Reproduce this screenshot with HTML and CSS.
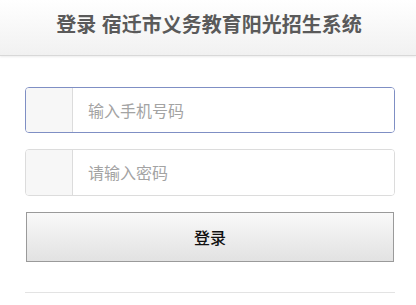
FILE: index.html
```html
<!DOCTYPE html>
<html lang="zh">
<head>
<meta charset="utf-8">
<title>登录 宿迁市义务教育阳光招生系统</title>
<link rel="stylesheet" href="styles.css">
</head>
<body>
<header class="bar">
  <h1 class="title">登录 宿迁市义务教育阳光招生系统</h1>
</header>
<main class="content">
  <form class="login">
    <div class="group focused">
      <span class="addon"></span>
      <input class="field" type="text" placeholder="输入手机号码">
    </div>
    <div class="group">
      <span class="addon"></span>
      <input class="field" type="password" placeholder="请输入密码">
    </div>
    <button class="btn" type="button">登录</button>
  </form>
  <hr class="rule">
</main>
</body>
</html>
```

FILE: styles.css
```css
* { box-sizing: border-box; }
html, body {
  margin: 0;
  padding: 0;
  background: #fff;
  font-family: "Liberation Sans", "Noto Sans CJK SC", sans-serif;
}
.bar {
  height: 56px;
  background: linear-gradient(#ffffff, #f1f1f1);
  border-bottom: 1px solid #d8d8d8;
  box-shadow: 0 1px 2px rgba(0,0,0,0.08);
  display: flex;
  align-items: center;
  justify-content: center;
}
.title {
  margin: 0;
  font-size: 20px;
  font-weight: bold;
  color: #5a5a5a;
  line-height: 24px;
  padding-bottom: 5px;
  padding-left: 2px;
}
.content {
  padding: 31px 21px 0 25px;
}
.login {
  display: flex;
  flex-direction: column;
  gap: 16px;
}
.group {
  display: flex;
  height: 47px;
  border: 1px solid #dcdcdc;
  border-radius: 4px;
  overflow: hidden;
  background: #fff;
}
.group.focused {
  height: 46px;
  border-color: #7f8fc4;
}
.addon {
  width: 47px;
  flex: none;
  background: #f7f7f7;
  border-right: 1px solid #dcdcdc;
}
.field {
  flex: 1;
  min-width: 0;
  border: 0;
  outline: 0;
  padding: 3px 0 0 15px;
  font-family: "Liberation Sans", "Noto Sans CJK SC", sans-serif;
  font-size: 16px;
  color: #333;
  background: #fff;
}
.field::placeholder { color: #a3a3a3; }
.btn {
  margin: 0 1px;
  height: 50px;
  border: 1px solid #9a9a9a;
  border-radius: 0;
  background: linear-gradient(#f9f9f9, #e2e2e2);
  font-family: "Liberation Sans", "Noto Sans CJK SC", sans-serif;
  font-size: 16px;
  font-weight: 500;
  color: #111;
  padding: 0;
}
.rule {
  margin: 30px 0 0;
  border: 0;
  border-top: 1px solid #e3e3e3;
  height: 0;
}
```
